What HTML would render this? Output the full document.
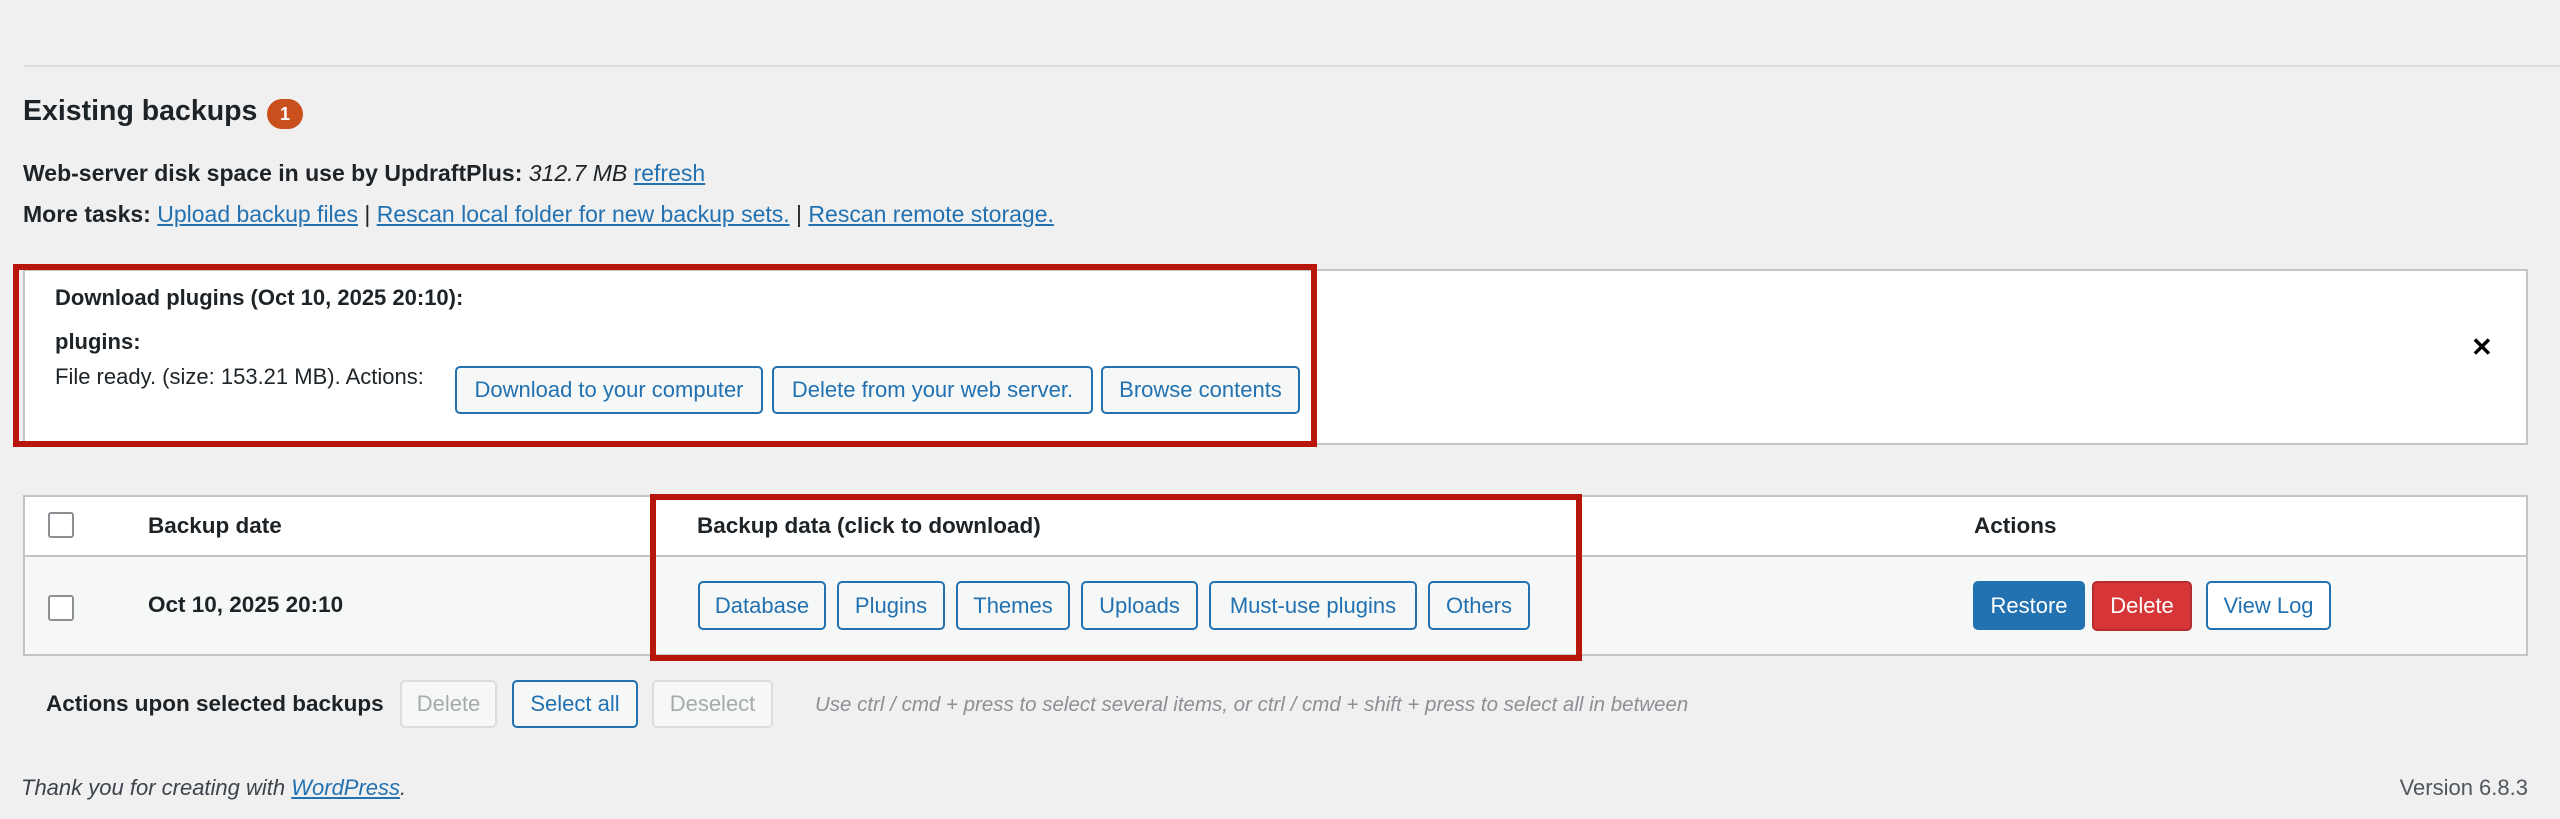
<!DOCTYPE html>
<html><head><meta charset="utf-8"><style>
*{box-sizing:border-box;margin:0;padding:0}
body{width:2560px;height:819px;background:#f0f0f1;font-family:"Liberation Sans",sans-serif;color:#1d2327;position:relative;overflow:hidden;font-size:23px}
.a{position:absolute;white-space:nowrap}
.b{position:absolute;border:2px solid #2271b1;background:#f6f7f7;color:#2271b1;border-radius:5px;display:flex;align-items:center;justify-content:center;font-size:22px}
a{color:#2271b1;text-decoration:underline}
.red{position:absolute;border:6px solid #b8160d}
.cb{position:absolute;width:26px;height:26px;border:2px solid #8c8f94;background:#fff;border-radius:3px}
</style></head><body>
<div class="a" style="left:24px;right:0;top:65px;height:2px;background:#dcdcde"></div>
<div class="a" style="left:23px;top:95px;font-size:28.5px;font-weight:bold">Existing backups</div>
<div class="a" style="left:267px;top:99px;width:36px;height:30px;border-radius:15px;background:#c9501c;color:#fff;font-size:18px;font-weight:bold;text-align:center;line-height:30px">1</div>
<div class="a" style="left:23px;top:160px"><b>Web-server disk space in use by UpdraftPlus:</b> <i>312.7 MB</i> <a>refresh</a></div>
<div class="a" style="left:23px;top:201px"><b>More tasks:</b> <a>Upload backup files</a> | <a>Rescan local folder for new backup sets.</a> | <a>Rescan remote storage.</a></div>

<div class="a" style="left:23px;top:269px;width:2505px;height:176px;background:#fff;border:2px solid #c3c4c7"></div>
<div class="a" style="left:55px;top:285px;font-weight:bold;font-size:22px">Download plugins (Oct 10, 2025 20:10):</div>
<div class="a" style="left:55px;top:329px;font-weight:bold;font-size:22px">plugins:</div>
<div class="a" style="left:55px;top:364px;font-size:22px">File ready. (size: 153.21 MB). Actions:</div>
<div class="b" style="left:455px;top:366px;width:308px;height:48px">Download to your computer</div>
<div class="b" style="left:772px;top:366px;width:321px;height:48px">Delete from your web server.</div>
<div class="b" style="left:1101px;top:366px;width:199px;height:48px">Browse contents</div>
<div class="a" style="left:2471px;top:332px;font-size:26px;font-weight:bold;color:#000">✕</div>
<div class="red" style="left:13px;top:264px;width:1304px;height:183px"></div>

<div class="a" style="left:23px;top:495px;width:2505px;height:161px;background:#fff;border:2px solid #c3c4c7"></div>
<div class="a" style="left:25px;top:555px;width:2501px;height:99px;background:#f6f7f7;border-top:2px solid #c3c4c7"></div>
<div class="cb" style="left:48px;top:512px"></div>
<div class="cb" style="left:48px;top:595px"></div>
<div class="a" style="left:148px;top:513px;font-weight:bold;font-size:22.5px">Backup date</div>
<div class="a" style="left:148px;top:592px;font-weight:bold;font-size:22.5px">Oct 10, 2025 20:10</div>
<div class="a" style="left:697px;top:513px;font-weight:bold;font-size:22.5px">Backup data (click to download)</div>
<div class="a" style="left:1974px;top:513px;font-weight:bold;font-size:22.5px">Actions</div>
<div class="b" style="left:698px;top:581px;width:128px;height:49px">Database</div>
<div class="b" style="left:837px;top:581px;width:108px;height:49px">Plugins</div>
<div class="b" style="left:956px;top:581px;width:114px;height:49px">Themes</div>
<div class="b" style="left:1081px;top:581px;width:117px;height:49px">Uploads</div>
<div class="b" style="left:1209px;top:581px;width:208px;height:49px">Must-use plugins</div>
<div class="b" style="left:1428px;top:581px;width:102px;height:49px">Others</div>
<div class="red" style="left:650px;top:494px;width:932px;height:167px"></div>
<div class="b" style="left:1973px;top:581px;width:112px;height:49px;background:#2271b1;color:#fff">Restore</div>
<div class="b" style="left:2092px;top:581px;width:100px;height:50px;background:#d63638;border-color:#b32d2e;color:#fff">Delete</div>
<div class="b" style="left:2206px;top:581px;width:125px;height:49px;background:#fff">View Log</div>

<div class="a" style="left:46px;top:691px;font-weight:bold;font-size:22.5px">Actions upon selected backups</div>
<div class="b" style="left:400px;top:680px;width:97px;height:48px;border-color:#dcdcde;color:#a7aaad">Delete</div>
<div class="b" style="left:512px;top:680px;width:126px;height:48px">Select all</div>
<div class="b" style="left:652px;top:680px;width:121px;height:48px;border-color:#dcdcde;color:#a7aaad">Deselect</div>
<div class="a" style="left:815px;top:693px;font-size:20.5px;font-style:italic;color:#8c8f94">Use ctrl / cmd + press to select several items, or ctrl / cmd + shift + press to select all in between</div>

<div class="a" style="left:21px;top:775px;font-style:italic;color:#3c434a;font-size:22px">Thank you for creating with <a>WordPress</a>.</div>
<div class="a" style="right:32px;top:775px;color:#50575e;font-size:22px">Version 6.8.3</div>
</body></html>
